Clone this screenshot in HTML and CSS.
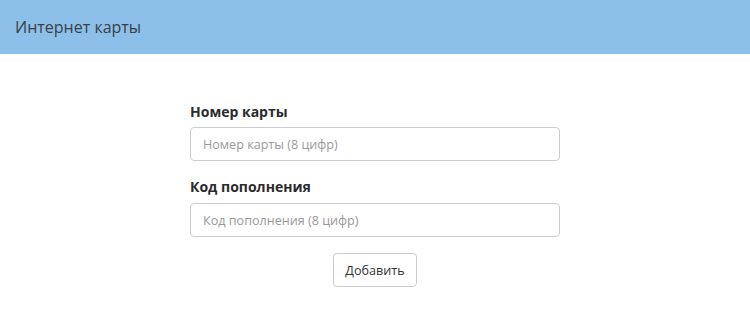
FILE: index.html
```html
<!DOCTYPE html>
<html lang="ru">
<head>
    <meta charset="UTF-8">
    <meta name="viewport" content="width=device-width, initial-scale=1.0">
    <title>Интернет карты</title>
    <link rel="stylesheet" href="styles.css">
</head>
<body>
    <header class="topbar">
        <span class="topbar-title">Интернет карты</span>
    </header>
    <section class="card-section">
        <form class="card-form">
            <div class="form-group">
                <label for="card-number">Номер карты</label>
                <input type="text" id="card-number" placeholder="Номер карты (8 цифр)">
            </div>
            <div class="form-group">
                <label for="card-code">Код пополнения</label>
                <input type="text" id="card-code" placeholder="Код пополнения (8 цифр)">
            </div>
            <div class="form-actions">
                <button type="submit">Добавить</button>
            </div>
        </form>
    </section>
</body>
</html>
```

FILE: styles.css
```css
/* General Styles */
body {
    margin: 0;
    padding: 0;
    background: #ffffff;
    font-family: "Open Sans", "Noto Sans", sans-serif;
    color: #333;
}

.topbar {
    background: #8cc0e9;
    height: 54px;
    display: flex;
    align-items: center;
    padding: 0 15px;
}

.topbar-title {
    font-size: 16px;
    color: #3a3f45;
}

.card-section {
    display: flex;
    justify-content: center;
    padding-top: 48px;
}

.card-form {
    width: 370px;
    display: flex;
    flex-direction: column;
}

.form-group {
    display: flex;
    flex-direction: column;
    margin-bottom: 16px;
}

.form-group + .form-group label {
    margin-bottom: 7px;
}

label {
    font-size: 14px;
    font-weight: bold;
    color: #2b2b2b;
    margin-bottom: 6px;
}

input {
    box-sizing: border-box;
    height: 34px;
    border: 1px solid #ccc;
    border-radius: 4px;
    padding: 0 12px;
    font-family: inherit;
    font-size: 12.6px;
    color: #555;
}

input::placeholder {
    color: #999;
}

.form-actions {
    display: flex;
    justify-content: center;
}

button {
    height: 34px;
    padding: 0 11px;
    background: #fff;
    border: 1px solid #ccc;
    border-radius: 4px;
    font-family: inherit;
    font-size: 12.6px;
    color: #333;
    cursor: pointer;
}
```
